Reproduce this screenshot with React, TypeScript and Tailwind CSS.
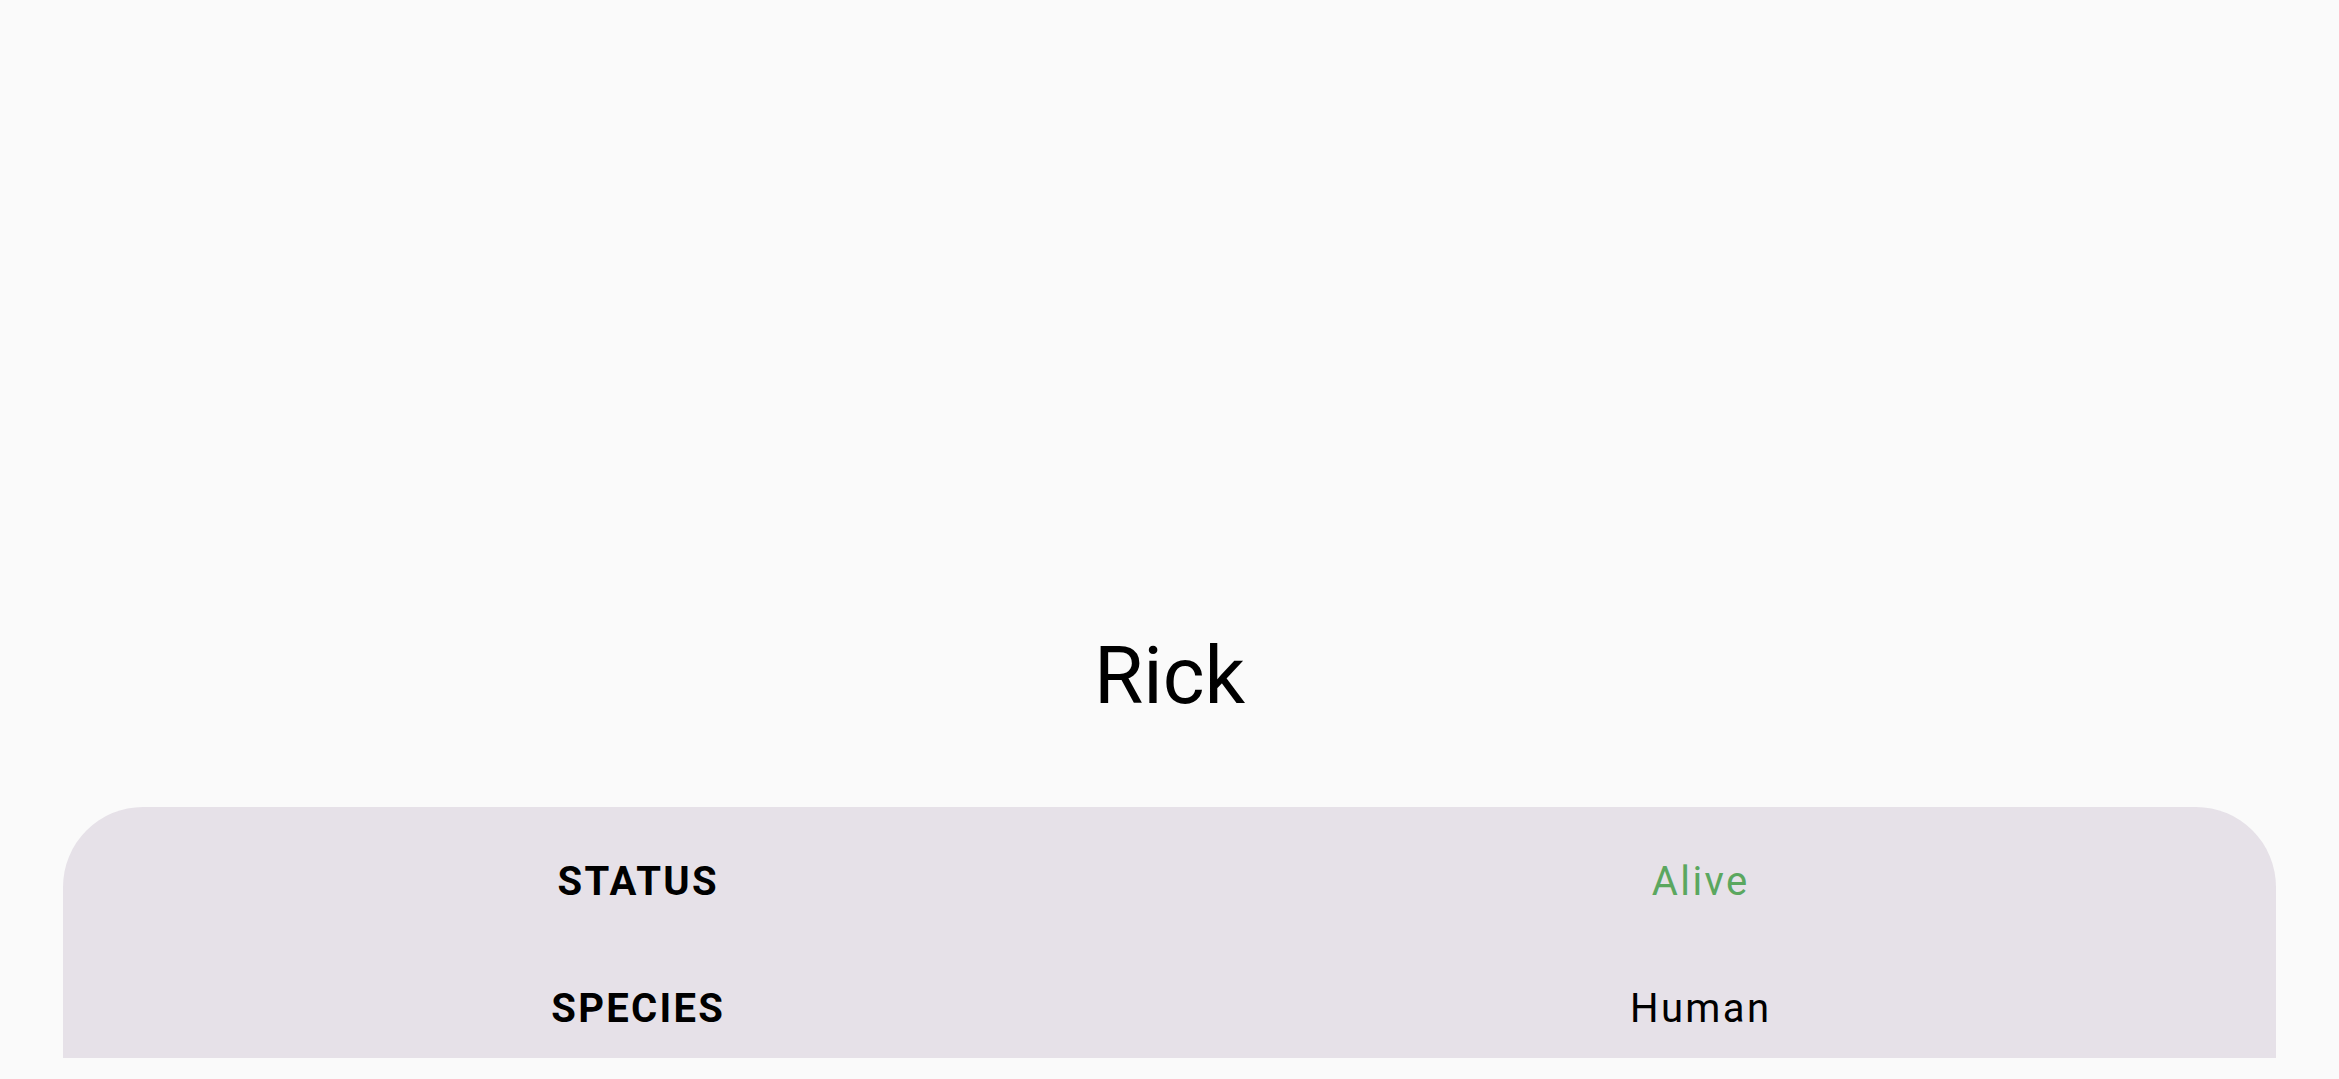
import React from 'react';

const character = {
  name: 'Rick',
  details: [
    { label: 'STATUS', value: 'Alive', color: 'text-[#5ba75f]' },
    { label: 'SPECIES', value: 'Human', color: 'text-black' },
  ],
};

export default function App() {
  return (
    <div
      className="w-full h-[1079px] bg-[#fafafa] flex flex-col overflow-hidden"
      style={{ fontFamily: 'Roboto, "Noto Sans", sans-serif' }}
    >
      {/* image area left empty */}
      <div className="h-[629px] shrink-0" />

      <h1 className="text-center text-[80px] leading-[94px] font-normal text-black">
        {character.name}
      </h1>

      <div className="mt-[84px] mx-[63px] h-[251px] shrink-0 bg-[#e6e1e8] rounded-t-[80px] px-[44px] pt-[51px] flex flex-col gap-[80px]">
        {character.details.map((d) => (
          <div key={d.label} className="grid grid-cols-2">
            <span className="text-center text-[40px] leading-[47px] font-bold tracking-[2.3px] text-black">
              {d.label}
            </span>
            <span className={`text-center text-[40px] leading-[47px] tracking-[2.4px] ${d.color}`}>
              {d.value}
            </span>
          </div>
        ))}
      </div>
    </div>
  );
}
